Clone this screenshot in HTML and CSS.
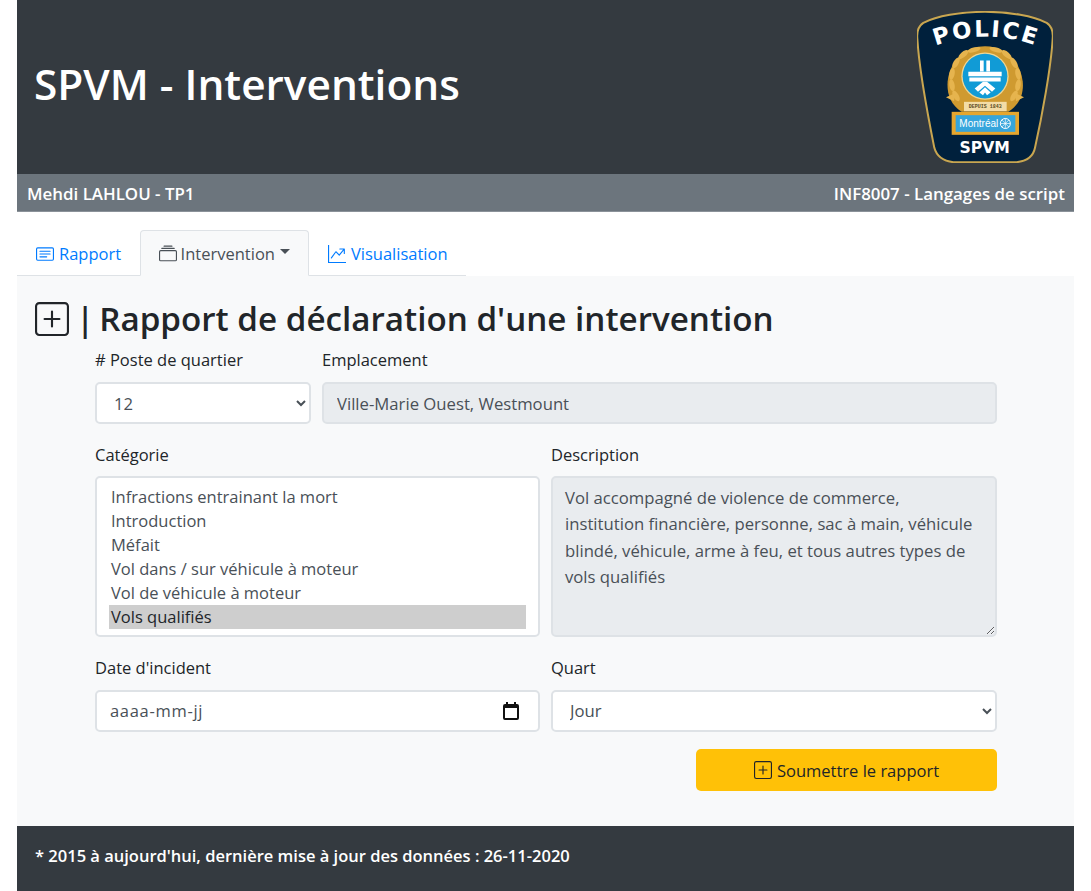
FILE: index.html
```html
<!DOCTYPE html>
<html lang="fr">
<head>
<meta charset="utf-8">
<title>SPVM - Interventions</title>
<link rel="stylesheet" href="styles.css">
</head>
<body>
<div class="page">
  <header class="banner">
    <h1 class="banner-title">SPVM - Interventions</h1>
    <svg class="logo" viewBox="51 30 408 455" role="img" aria-label="Police SPVM">
      <path d="M255 32C330 32 400 45 440 65C455 75 460 90 458 112C453 200 425 350 405 440C400 465 380 480 350 483L160 483C130 480 110 465 103 440C85 350 57 200 52 112C50 90 55 75 70 65C110 45 180 32 255 32Z" fill="#00203c" stroke="#c9a650" stroke-width="6"/>
      <defs><path id="arc" d="M92 140Q255 72 424 140"/></defs>
      <text class="logo-police"><textPath href="#arc" startOffset="50%" text-anchor="middle">POLICE</textPath></text>
      <path d="M255 135C200 135 150 175 143 240C140 275 150 310 185 332L325 332C360 310 372 275 368 240C360 175 310 135 255 135Z" fill="#cf9a30"/>
      <g fill="#e6b44e">
        <g id="laurel">
          <ellipse cx="222" cy="146" rx="20" ry="7" transform="rotate(-15 222 146)"/>
          <ellipse cx="190" cy="160" rx="18" ry="8" transform="rotate(-40 190 160)"/>
          <ellipse cx="168" cy="185" rx="18" ry="8" transform="rotate(-60 168 185)"/>
          <ellipse cx="156" cy="218" rx="18" ry="8" transform="rotate(-80 156 218)"/>
          <ellipse cx="156" cy="252" rx="18" ry="8" transform="rotate(-100 156 252)"/>
          <ellipse cx="168" cy="284" rx="18" ry="8" transform="rotate(-120 168 284)"/>
          <path d="M138 288L165 276L162 300Z"/>
        </g>
        <use href="#laurel" transform="matrix(-1 0 0 1 510 0)"/>
      </g>
      <circle cx="255" cy="225" r="71" fill="#efd694"/>
      <circle cx="255" cy="225" r="67" fill="#119bd6"/>
      <g fill="#fff">
        <path d="M240 178H251V211H240ZM259 178H270V211H259Z"/>
        <path d="M205 212H305V225H205ZM208 229H302V241H208Z"/>
        <path d="M249 242H261L286 262L276 272L255 254L234 272L224 262Z"/>
        <path d="M255 258L272 274L261 282L255 274L249 282L238 274Z"/>
      </g>
      <rect x="192" y="302" width="128" height="28" fill="#f3dca6"/>
      <text x="256" y="321" class="logo-since">DEPUIS 1843</text>
      <rect x="155" y="332" width="202" height="69" fill="#e5a62e"/>
      <rect x="167" y="342" width="179" height="50" fill="#35a5dc"/>
      <text x="178" y="378" class="logo-city">Montréal</text>
      <circle cx="316" cy="367" r="15" fill="none" stroke="#fff" stroke-width="3"/>
      <path d="M316 352V382M301 367H331M305 356L327 378M327 356L305 378" stroke="#fff" stroke-width="2"/>
      <text x="254" y="456" class="logo-spvm">SPVM</text>
    </svg>
  </header>
  <div class="subbar">
    <span>Mehdi LAHLOU - TP1</span>
    <span>INF8007 - Langages de script</span>
  </div>
  <nav class="tabs-wrap">
    <ul class="tabs">
      <li><a class="tab" href="#rapport">
        <svg class="icon" viewBox="0 0 16 16"><path d="M14.5 3a.5.5 0 0 1 .5.5v9a.5.5 0 0 1-.5.5h-13a.5.5 0 0 1-.5-.5v-9a.5.5 0 0 1 .5-.5h13zm-13-1A1.5 1.5 0 0 0 0 3.5v9A1.5 1.5 0 0 0 1.5 14h13a1.5 1.5 0 0 0 1.5-1.5v-9A1.5 1.5 0 0 0 14.5 2h-13z"/><path d="M3 5.5a.5.5 0 0 1 .5-.5h9a.5.5 0 0 1 0 1h-9a.5.5 0 0 1-.5-.5zM3 8a.5.5 0 0 1 .5-.5h9a.5.5 0 0 1 0 1h-9A.5.5 0 0 1 3 8zm0 2.5a.5.5 0 0 1 .5-.5h6a.5.5 0 0 1 0 1h-6a.5.5 0 0 1-.5-.5z"/></svg>
        Rapport</a></li>
      <li><a class="tab tab-active" href="#intervention">
        <svg class="icon" viewBox="0 0 16 16"><path d="M2.5 3.5a.5.5 0 0 1 0-1h11a.5.5 0 0 1 0 1h-11zm2-2a.5.5 0 0 1 0-1h7a.5.5 0 0 1 0 1h-7zM0 13a1.5 1.5 0 0 0 1.5 1.5h13A1.5 1.5 0 0 0 16 13V6a1.5 1.5 0 0 0-1.5-1.5h-13A1.5 1.5 0 0 0 0 6v7zm1.5.5A.5.5 0 0 1 1 13V6a.5.5 0 0 1 .5-.5h13a.5.5 0 0 1 .5.5v7a.5.5 0 0 1-.5.5h-13z"/></svg>
        Intervention<span class="caret"></span></a></li>
      <li><a class="tab" href="#visualisation">
        <svg class="icon" viewBox="0 0 16 16"><path fill-rule="evenodd" d="M0 0h1v15h15v1H0V0zm10 3.5a.5.5 0 0 1 .5-.5h4a.5.5 0 0 1 .5.5v4a.5.5 0 0 1-1 0V4.9l-3.613 4.417a.5.5 0 0 1-.74.037L7.06 6.767l-3.656 5.027a.5.5 0 0 1-.808-.588l4-5.5a.5.5 0 0 1 .758-.06l2.609 2.61L13.445 4H10.5a.5.5 0 0 1-.5-.5z"/></svg>
        Visualisation</a></li>
    </ul>
  </nav>
  <main class="content">
    <h2 class="report-title">
      <svg class="title-icon" viewBox="0 0 16 16"><path fill-rule="evenodd" d="M14 1H2a1 1 0 0 0-1 1v12a1 1 0 0 0 1 1h12a1 1 0 0 0 1-1V2a1 1 0 0 0-1-1zM2 0a2 2 0 0 0-2 2v12a2 2 0 0 0 2 2h12a2 2 0 0 0 2-2V2a2 2 0 0 0-2-2H2z"/><path fill-rule="evenodd" d="M8 4a.5.5 0 0 1 .5.5v3h3a.5.5 0 0 1 0 1h-3v3a.5.5 0 0 1-1 0v-3h-3a.5.5 0 0 1 0-1h3v-3A.5.5 0 0 1 8 4z"/></svg>
      <span>|</span>
      <span>Rapport de déclaration d'une intervention</span>
    </h2>
    <form class="report-form">
      <div class="row row-post">
        <div class="field">
          <label class="label" for="poste">&#35; Poste de quartier</label>
          <select id="poste" class="control"><option>12</option></select>
        </div>
        <div class="field">
          <label class="label" for="lieu">Emplacement</label>
          <input id="lieu" class="control control-readonly" type="text" value="Ville-Marie Ouest, Westmount" readonly>
        </div>
      </div>
      <div class="row row-half row-tall">
        <div class="field">
          <label class="label" for="cat">Catégorie</label>
          <select id="cat" class="listbox" size="6">
            <option>Infractions entrainant la mort</option>
            <option>Introduction</option>
            <option>Méfait</option>
            <option>Vol dans / sur véhicule à moteur</option>
            <option>Vol de véhicule à moteur</option>
            <option selected>Vols qualifiés</option>
          </select>
        </div>
        <div class="field">
          <label class="label" for="desc">Description</label>
          <textarea id="desc" class="textarea" readonly>Vol accompagné de violence de commerce, institution financière, personne, sac à main, véhicule blindé, véhicule, arme à feu, et tous autres types de vols qualifiés</textarea>
        </div>
      </div>
      <div class="row row-half row-last">
        <div class="field">
          <label class="label" for="date">Date d'incident</label>
          <div class="date-wrap">
            <input id="date" class="control control-date" type="text" value="aaaa-mm-jj">
            <svg class="calendar" viewBox="0 0 16 18"><path d="M3 0h2v2h6V0h2v2h1a2 2 0 0 1 2 2v12a2 2 0 0 1-2 2H2a2 2 0 0 1-2-2V4a2 2 0 0 1 2-2h1zM2 6v10h12V6z"/></svg>
          </div>
        </div>
        <div class="field">
          <label class="label" for="quart">Quart</label>
          <select id="quart" class="control"><option>Jour</option></select>
        </div>
      </div>
      <div class="actions">
        <button class="submit" type="button">
          <svg class="icon" viewBox="0 0 16 16"><path fill-rule="evenodd" d="M14 1H2a1 1 0 0 0-1 1v12a1 1 0 0 0 1 1h12a1 1 0 0 0 1-1V2a1 1 0 0 0-1-1zM2 0a2 2 0 0 0-2 2v12a2 2 0 0 0 2 2h12a2 2 0 0 0 2-2V2a2 2 0 0 0-2-2H2z"/><path fill-rule="evenodd" d="M8 4a.5.5 0 0 1 .5.5v3h3a.5.5 0 0 1 0 1h-3v3a.5.5 0 0 1-1 0v-3h-3a.5.5 0 0 1 0-1h3v-3A.5.5 0 0 1 8 4z"/></svg>
          Soumettre le rapport
        </button>
      </div>
    </form>
  </main>
  <footer class="footer">* 2015 à aujourd'hui, dernière mise à jour des données : 26-11-2020</footer>
</div>
</body>
</html>
```
FILE: styles.css
```css
* { box-sizing: border-box; }
html, body { margin: 0; padding: 0; background: #fff; }
body { font-family: "Open Sans", "Noto Sans", sans-serif; font-size: 16.5px; color: #212529; overflow: hidden; }
.page { margin: 0 17px; height: 891px; display: flex; flex-direction: column; }

.banner { height: 174px; background: #343a40; display: flex; justify-content: space-between; align-items: center; padding: 0 21px 0 17px; flex: none; }
.banner-title { margin: 0 0 6px; color: #fff; font-size: 42.4px; font-weight: 600; line-height: 1.2; }
.logo { width: 136px; height: 152px; }
.logo-police { font: bold 68px "DejaVu Sans", sans-serif; fill: #fff; letter-spacing: 6px; }
.logo-since { font: bold 15px "Liberation Mono", monospace; fill: #5a4a20; text-anchor: middle; }
.logo-city { font: 30px "Liberation Sans", sans-serif; fill: #fff; }
.logo-spvm { font: bold 47px "DejaVu Sans", sans-serif; fill: #fff; text-anchor: middle; }

.subbar { height: 38px; background: #6c757d; color: #fff; font-weight: 600; font-size: 16.9px; display: flex; justify-content: space-between; align-items: center; padding: 1px 9px 0 10px; flex: none; border-bottom: 1px solid #8b9299; }

.tabs-wrap { padding-top: 18px; flex: none; }
.tabs { list-style: none; margin: 0; padding: 0; display: inline-flex; border-bottom: 1px solid #dee2e6; height: 46px; }
.tab { display: flex; align-items: center; gap: 5px; height: 46px; padding: 1px 17.5px 0 18px; color: #007bff; text-decoration: none; font-size: 16.5px; border: 1px solid transparent; border-radius: 4px 4px 0 0; }
.tab-active { gap: 4px; padding: 1px 18px 0; color: #495057; background: #f8f9fa; border-color: #dee2e6 #dee2e6 #f8f9fa; }
.icon { width: 18px; height: 18px; fill: currentColor; flex: none; }
.caret { display: inline-block; margin-left: 1px; margin-bottom: 4px; border-top: 5px solid currentColor; border-left: 5.5px solid transparent; border-right: 5.5px solid transparent; }

.content { flex: 1; background: #f8f9fa; padding: 23px 77px 0 18px; }
.report-title { margin: 0 0 9px; font-size: 33.2px; font-weight: 600; line-height: 40px; display: flex; align-items: center; gap: 7px; }
.title-icon { width: 34px; height: 34px; fill: currentColor; flex: none; }
.report-title span:last-child { margin-left: -2px; }

.report-form { margin-left: 60px; }
.row { display: grid; gap: 11px; margin-bottom: 19px; }
.row-post { grid-template-columns: 216px 1fr; }
.row-half { grid-template-columns: 445px 1fr; }
.row-last { margin-bottom: 17px; }
.field { min-width: 0; }
.label { display: block; line-height: 24px; margin: 0 0 10px; }
.row-tall .label { margin-bottom: 9px; }
.control, .textarea, .listbox { width: 100%; font-family: inherit; font-size: 16.7px; color: #495057; border: 2px solid #dee2e6; border-radius: 5px; outline: none; }
.control { display: block; height: 42px; padding: 0 13px; background: #fff; }
select.control { padding: 0 10px 0 13px; }
.row-last .control { padding-bottom: 2px; }
.control-readonly, .textarea { background: #e9ecef; }
.listbox { display: block; height: 161px; padding: 7px 12px; background: #fff; overflow: hidden; font-size: 16.5px; }
.listbox option { padding: 0 0 0 2px; min-height: 24px; line-height: 24px; }
.listbox option:checked { background: #cecece linear-gradient(#cecece, #cecece); color: #212529; }
.textarea { display: block; height: 161px; padding: 7px 16px 8px 12px; font-size: 16.7px; line-height: 26.4px; resize: vertical; }
.date-wrap { position: relative; }
.control-date { letter-spacing: .7px; font-size: 16.5px; }
.calendar { position: absolute; right: 21px; top: 12px; width: 16px; height: 18px; fill: #111; }

.actions { display: flex; justify-content: flex-end; }
.submit { width: 301px; height: 42px; background: #ffc107; color: #212529; border: 0; border-radius: 5px; font-family: inherit; font-size: 16.5px; display: flex; align-items: center; justify-content: center; gap: 5px; }

.footer { height: 65px; flex: none; background: #343a40; color: #fff; font-weight: 600; font-size: 16.5px; padding: 18px 18px 0; }
```
